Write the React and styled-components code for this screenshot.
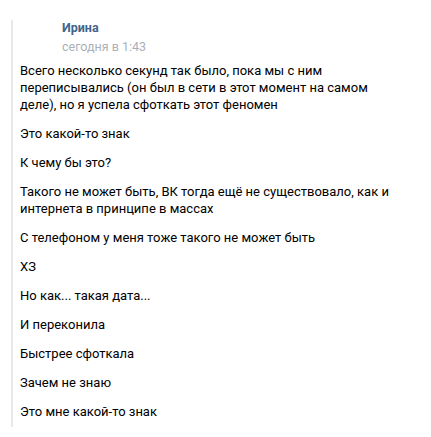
import React from 'react';
import styled, { createGlobalStyle } from 'styled-components';

const GlobalStyle = createGlobalStyle`
    body {
        margin: 0;
        background: #fff;
        font-family: Roboto, "Liberation Sans", Arial, sans-serif;
    }
`

const messages = [
    'Всего несколько секунд так было, пока мы с ним переписывались (он был в сети в этот момент на самом деле), но я успела сфоткать этот феномен',
    'Это какой-то знак',
    'К чему бы это?',
    'Такого не может быть, ВК тогда ещё не существовало, как и интернета в принципе в массах',
    'С телефоном у меня тоже такого не может быть',
    'ХЗ',
    'Но как... такая дата...',
    'И переконила',
    'Быстрее сфоткала',
    'Зачем не знаю',
    'Это мне какой-то знак',
];

function App() {
    return (
        <Page>
            <GlobalStyle />
            <Quote>
                <Header>
                    <Author>Ирина</Author>
                    <Time>сегодня в 1:43</Time>
                </Header>
                <Body>
                    {messages.map((text, index) => (
                        <Message key={index}>{text}</Message>
                    ))}
                </Body>
            </Quote>
        </Page>
    );
}

const Page = styled.div`
    width: 431px;
    padding: 20px 0 0 11px;
    box-sizing: border-box;
`

const Quote = styled.div`
    border-left: 2px solid #e7e8ec;
    padding: 0 0 7px 7px;
    width: 375px;
`

const Header = styled.div`
    padding-left: 42px;
    display: flex;
    flex-direction: column;
    gap: 3px;
`

const Author = styled.div`
    font-size: 12.5px;
    font-weight: 700;
    color: #42648b;
    line-height: 16px;
`

const Time = styled.div`
    font-size: 12.5px;
    color: #abb0b7;
    line-height: 16px;
`

const Body = styled.div`
    margin-top: 7px;
    display: flex;
    flex-direction: column;
    gap: 12px;
`

const Message = styled.div`
    font-size: 13px;
    line-height: 17px;
    color: #000;
`

export default App
